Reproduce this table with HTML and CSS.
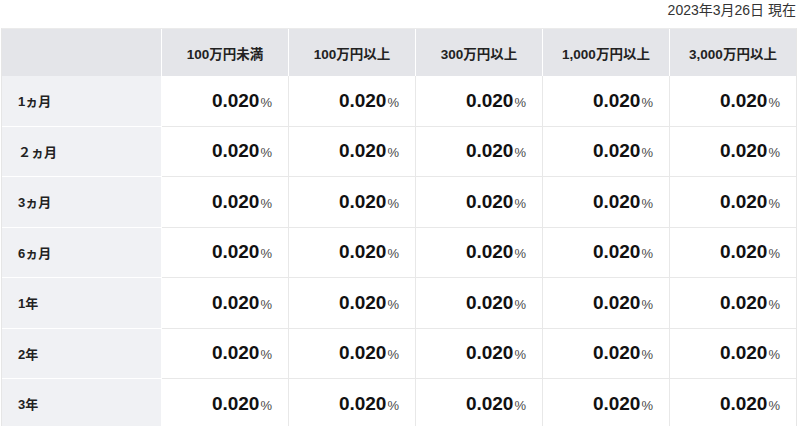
FILE: index.html
```html
<!DOCTYPE html>
<html lang="ja">
<head>
<meta charset="utf-8">
<link rel="stylesheet" href="styles.css">
</head>
<body>
<div class="wrap">
  <p class="date">2023年3月26日 現在</p>
  <table class="rates">
    <thead>
      <tr>
        <th class="corner"></th>
        <th>100万円未満</th>
        <th>100万円以上</th>
        <th>300万円以上</th>
        <th>1,000万円以上</th>
        <th>3,000万円以上</th>
      </tr>
    </thead>
    <tbody>
      <tr><th class="term">1ヵ月</th><td><b>0.020</b><span>%</span></td><td><b>0.020</b><span>%</span></td><td><b>0.020</b><span>%</span></td><td><b>0.020</b><span>%</span></td><td><b>0.020</b><span>%</span></td></tr>
      <tr><th class="term">２ヵ月</th><td><b>0.020</b><span>%</span></td><td><b>0.020</b><span>%</span></td><td><b>0.020</b><span>%</span></td><td><b>0.020</b><span>%</span></td><td><b>0.020</b><span>%</span></td></tr>
      <tr><th class="term">3ヵ月</th><td><b>0.020</b><span>%</span></td><td><b>0.020</b><span>%</span></td><td><b>0.020</b><span>%</span></td><td><b>0.020</b><span>%</span></td><td><b>0.020</b><span>%</span></td></tr>
      <tr><th class="term">6ヵ月</th><td><b>0.020</b><span>%</span></td><td><b>0.020</b><span>%</span></td><td><b>0.020</b><span>%</span></td><td><b>0.020</b><span>%</span></td><td><b>0.020</b><span>%</span></td></tr>
      <tr><th class="term">1年</th><td><b>0.020</b><span>%</span></td><td><b>0.020</b><span>%</span></td><td><b>0.020</b><span>%</span></td><td><b>0.020</b><span>%</span></td><td><b>0.020</b><span>%</span></td></tr>
      <tr><th class="term">2年</th><td><b>0.020</b><span>%</span></td><td><b>0.020</b><span>%</span></td><td><b>0.020</b><span>%</span></td><td><b>0.020</b><span>%</span></td><td><b>0.020</b><span>%</span></td></tr>
      <tr><th class="term">3年</th><td><b>0.020</b><span>%</span></td><td><b>0.020</b><span>%</span></td><td><b>0.020</b><span>%</span></td><td><b>0.020</b><span>%</span></td><td><b>0.020</b><span>%</span></td></tr>
    </tbody>
  </table>
</div>
</body>
</html>
```

FILE: styles.css
```css
html, body {
  margin: 0;
  padding: 0;
  background: #ffffff;
}
body {
  font-family: "Liberation Sans", "Noto Sans CJK JP", sans-serif;
  color: #222222;
}
.wrap {
  width: 796px;
  padding-left: 1px;
}
.date {
  margin: 0;
  height: 28px;
  padding-top: 1px;
  box-sizing: border-box;
  text-align: right;
  font-size: 14px;
  line-height: 18px;
  color: #333333;
  padding-right: 1px;
}
.rates {
  border-collapse: separate;
  border-spacing: 0;
  table-layout: fixed;
  width: 796px;
  border-top: 1px solid #ebebeb;
  border-left: 1px solid #e6e6e6;
  border-right: 1px solid #e6e6e6;
}
.rates th, .rates td {
  padding: 0;
}
.rates thead th {
  height: 47px;
  background: #e4e5e9;
  font-size: 13.5px;
  font-weight: bold;
  text-align: center;
  color: #222222;
  border-right: 1px solid #ffffff;
  width: 126px;
}
.rates thead th:last-child {
  border-right: none;
}
.rates thead th.corner {
  width: 159px;
}
.rates tbody th.term {
  background: #f0f1f4;
  text-align: left;
  padding-left: 16px;
  font-size: 13px;
  font-weight: bold;
  border-right: 1px solid #ffffff;
  border-bottom: 1px solid #ffffff;
  height: 49.5px;
}
.rates td {
  text-align: right;
  padding-right: 16px;
  border-right: 1px solid #e8e8e8;
  border-bottom: 1px solid #e8e8e8;
  height: 49.5px;
}
.rates td:last-child {
  border-right: none;
}
.rates td b {
  font-size: 19px;
  font-weight: bold;
  color: #111111;
}
.rates td span {
  font-size: 13px;
  color: #4a4a4a;
  margin-left: 1px;
}
```
